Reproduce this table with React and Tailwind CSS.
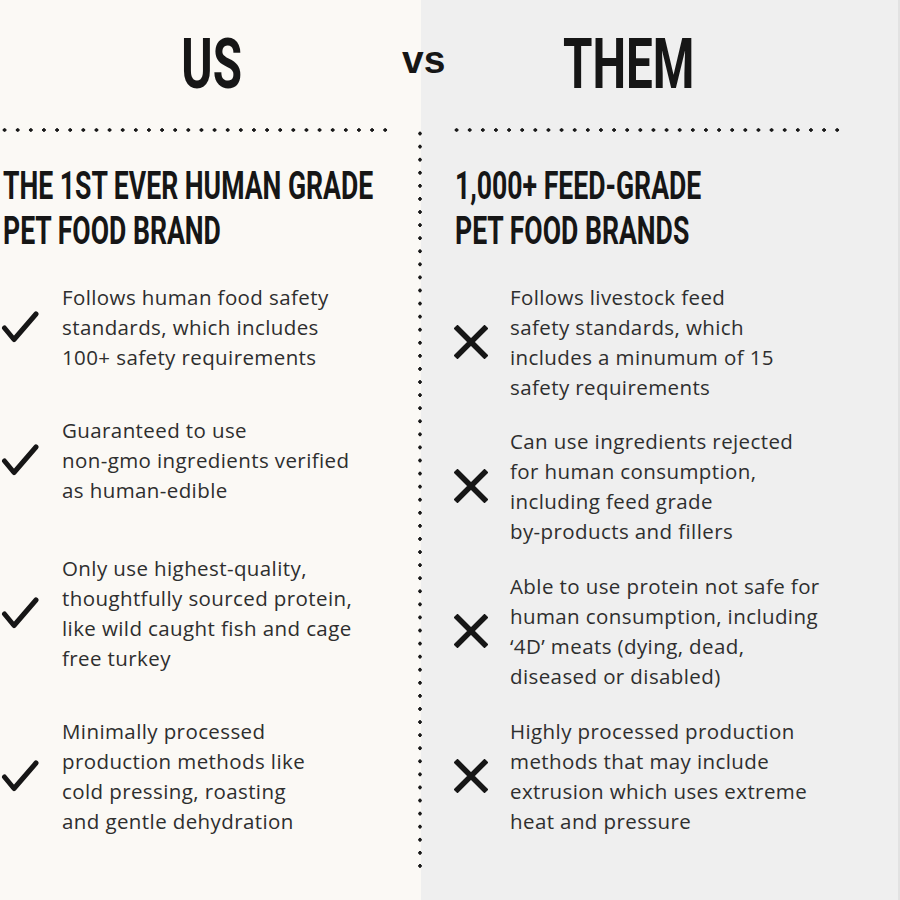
const US_ITEMS = [
  { lines: ['Follows human food safety', 'standards, which includes', '100+ safety requirements'], gap: 'mt-0' },
  { lines: ['Guaranteed to use', 'non-gmo ingredients verified', 'as human-edible'], gap: 'mt-[43px]' },
  { lines: ['Only use highest-quality,', 'thoughtfully sourced protein,', 'like wild caught fish and cage', 'free turkey'], gap: 'mt-[48px]' },
  { lines: ['Minimally processed', 'production methods like', 'cold pressing, roasting', 'and gentle dehydration'], gap: 'mt-[43px]' },
]

const THEM_ITEMS = [
  { lines: ['Follows livestock feed', 'safety standards, which', 'includes a minumum of 15', 'safety requirements'], gap: 'mt-0' },
  { lines: ['Can use ingredients rejected', 'for human consumption,', 'including feed grade', 'by-products and fillers'], gap: 'mt-[24px]' },
  { lines: ['Able to use protein not safe for', 'human consumption, including', '\u20184D\u2019 meats (dying, dead,', 'diseased or disabled)'], gap: 'mt-[25px]' },
  { lines: ['Highly processed production', 'methods that may include', 'extrusion which uses extreme', 'heat and pressure'], gap: 'mt-[25px]' },
]

function Check() {
  return (
    <svg width="38" height="34" viewBox="0 0 38 34" className="shrink-0">
      <path d="M3.5 18 L13 29.5 L35 4" fill="none" stroke="#161616" strokeWidth="5" strokeLinecap="round" strokeLinejoin="round" />
    </svg>
  )
}

function Cross() {
  return (
    <svg width="34" height="34" viewBox="0 0 34 34" className="shrink-0">
      <path d="M3.5 3.5 L30.5 30.5 M30.5 3.5 L3.5 30.5" fill="none" stroke="#161616" strokeWidth="5.5" strokeLinecap="square" />
    </svg>
  )
}

// narrow display face: Roboto bold squeezed horizontally
function Narrow({ children, scale = 'scale-x-[0.7]', origin = 'origin-left' }) {
  return (
    <span className={`inline-block whitespace-nowrap ${scale} ${origin}`}>{children}</span>
  )
}

function Item({ item, icon, iconBox }) {
  return (
    <div className={`flex items-center ${item.gap}`}>
      <div className={iconBox}>{icon}</div>
      <div className="font-['Open_Sans',sans-serif] text-[20.5px] leading-[30px] tracking-[0.4px] text-[#2e2e2e] whitespace-nowrap">
        {item.lines.map((l) => <div key={l}>{l}</div>)}
      </div>
    </div>
  )
}

function HDots({ className }) {
  return (
    <div className={`h-[4px] bg-[radial-gradient(circle,#1a1a1a_1.5px,transparent_2px)] bg-[length:13.14px_4px] ${className}`} />
  )
}

export default function App() {
  return (
    <div className="relative w-[900px] h-[900px] flex overflow-hidden font-['Roboto',sans-serif]">
      {/* US column */}
      <div className="w-[418px] bg-[#fbf9f5] flex flex-col">
        <div className="h-[128px] flex items-center justify-center pl-[6px]">
          <h1 className="font-bold text-[70px] leading-none text-[#161616]">
            <Narrow scale="scale-x-[0.68]" origin="origin-center">US</Narrow>
          </h1>
        </div>
        <HDots className="ml-[-2.5px] w-[394px]" />
        <h2 className="mt-[32px] pl-[3px] font-bold text-[38px] leading-[45px] text-[#161616]">
          <Narrow>THE 1ST EVER HUMAN GRADE</Narrow><br />
          <Narrow>PET FOOD BRAND</Narrow>
        </h2>
        <div className="mt-[28px] flex flex-col">
          {US_ITEMS.map((it, i) => (
            <Item key={i} item={it} icon={<Check />} iconBox="w-[62px] pl-[1px]" />
          ))}
        </div>
      </div>

      {/* dotted divider */}
      <div className="w-[4px] bg-[linear-gradient(to_right,#fbf9f5_3px,#efefef_3px)] pt-[127px]">
        <div className="h-[745px] bg-[radial-gradient(circle,#1a1a1a_1.5px,transparent_2px)] bg-[length:4px_13.08px]" />
      </div>

      {/* THEM column */}
      <div className="flex-1 bg-[#efefef] flex flex-col border-r-2 border-[#e2e2e2]">
        <div className="h-[128px] flex items-center justify-center pr-[62px]">
          <h1 className="font-bold text-[70px] leading-none text-[#161616]">
            <Narrow scale="scale-x-[0.68]" origin="origin-center">THEM</Narrow>
          </h1>
        </div>
        <HDots className="ml-[27.5px] w-[394px]" />
        <h2 className="mt-[32px] pl-[33px] font-bold text-[38px] leading-[45px] text-[#161616]">
          <Narrow>1,000+ FEED-GRADE</Narrow><br />
          <Narrow>PET FOOD BRANDS</Narrow>
        </h2>
        <div className="mt-[28px] flex flex-col">
          {THEM_ITEMS.map((it, i) => (
            <Item key={i} item={it} icon={<Cross />} iconBox="w-[88px] pl-[32px]" />
          ))}
        </div>
      </div>

      {/* vs sits over the seam between the columns */}
      <div className="absolute left-[402px] top-[40px] font-['Liberation_Sans',Arial,sans-serif] font-bold text-[39px] leading-none text-[#161616]">
        vs
      </div>
    </div>
  )
}
